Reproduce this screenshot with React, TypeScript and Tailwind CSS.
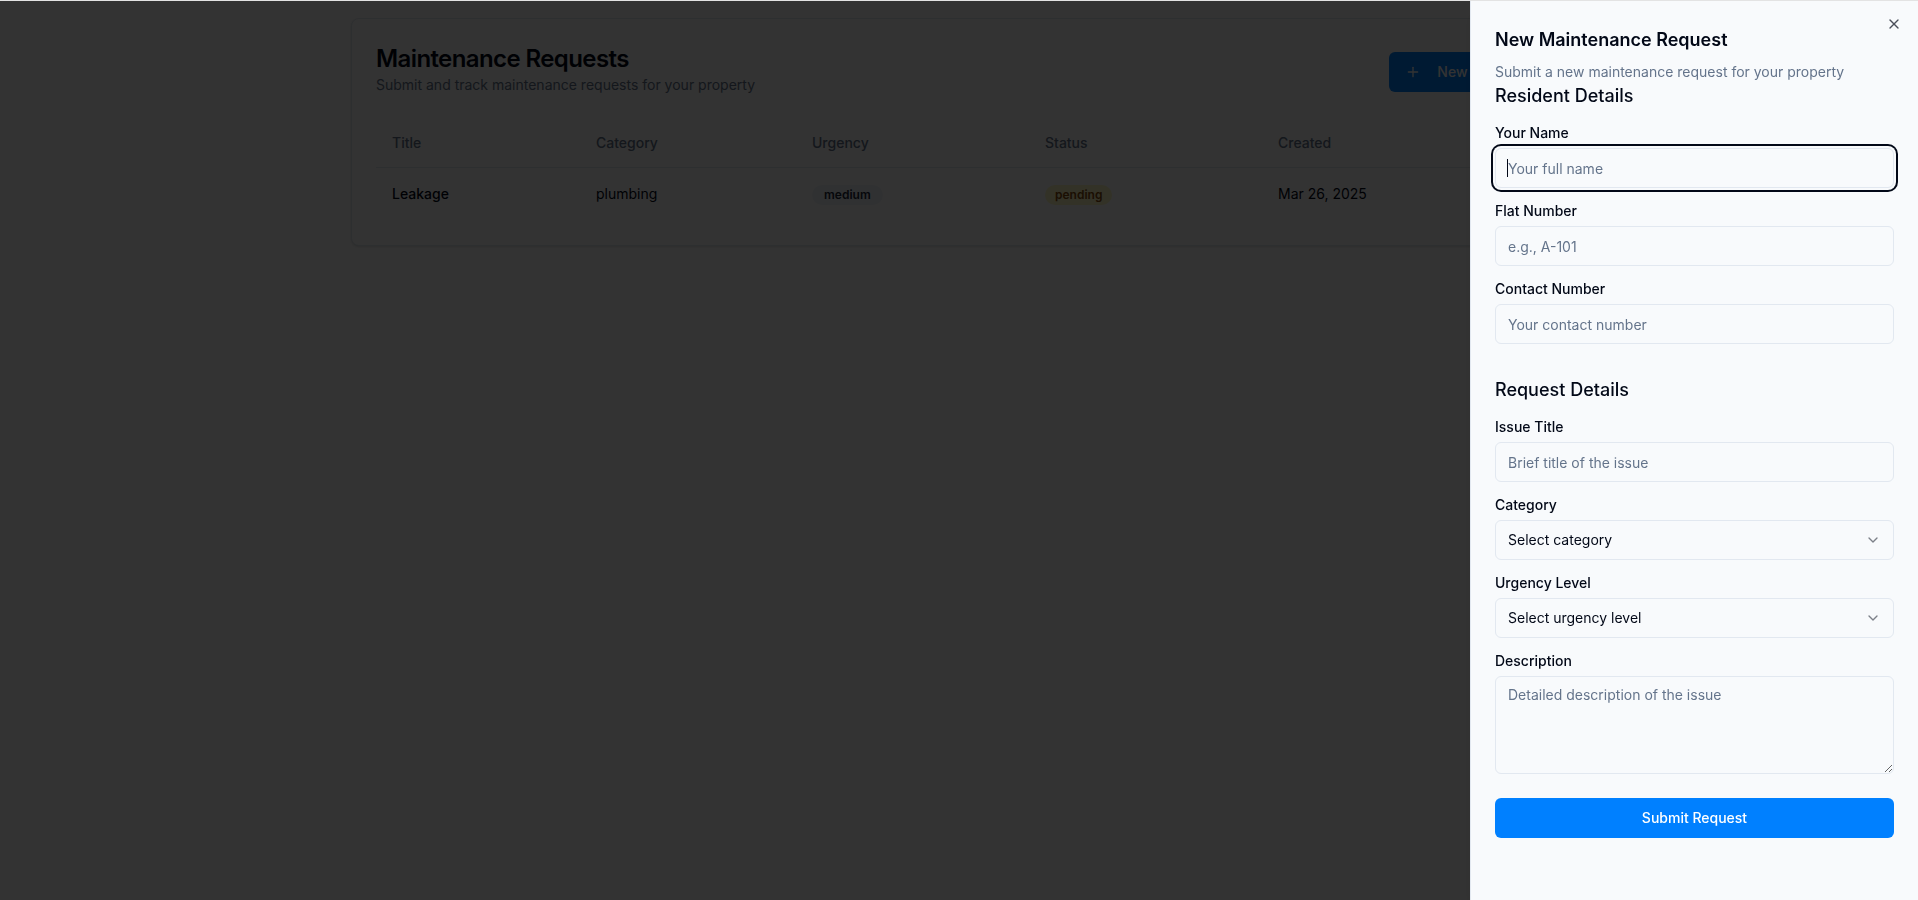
import { ChevronDown, Plus, X } from "lucide-react";

const requests = [
  {
    title: "Leakage",
    category: "plumbing",
    urgency: "medium",
    status: "pending",
    created: "Mar 26, 2025",
  },
];

function Field({ label, children }: { label: string; children: React.ReactNode }) {
  return (
    <div className="space-y-2">
      <label className="block text-sm font-medium leading-none text-[#020817]">{label}</label>
      {children}
    </div>
  );
}

const inputClass =
  "flex h-10 w-full rounded-md border border-[#e2e8f0] bg-[#f8fafc] px-3 py-2 text-sm text-[#020817] placeholder:text-[#64748b] outline-none";

function SelectTrigger({ placeholder }: { placeholder: string }) {
  return (
    <button
      type="button"
      className="flex h-10 w-full items-center justify-between rounded-md border border-[#e2e8f0] bg-[#f8fafc] px-3 py-2 text-sm text-[#020817]"
    >
      <span>{placeholder}</span>
      <ChevronDown className="h-4 w-4 opacity-50" />
    </button>
  );
}

export default function App() {
  return (
    <div className="relative min-h-screen bg-white font-['Inter',sans-serif] text-[#020817]">
      <div className="mx-auto max-w-7xl px-8 pt-[18px]">
        <div className="rounded-lg border border-[#e2e8f0] bg-white shadow-sm">
          <div className="flex items-start justify-between p-6">
            <div>
              <h1 className="text-2xl font-semibold tracking-tight">Maintenance Requests</h1>
              <p className="text-sm text-[#64748b]">Submit and track maintenance requests for your property</p>
            </div>
            <button className="mt-[9px] flex h-10 items-center gap-4 rounded-md bg-[#0080ff] px-4 text-sm font-medium text-white">
              <Plus className="h-4 w-4" />
              New Request
            </button>
          </div>
          <div className="px-6 pb-6">
            <table className="w-full table-fixed text-sm">
              <thead>
                <tr className="border-b border-[#e2e8f0]">
                  <th className="h-12 w-[204px] px-4 text-left font-medium text-[#64748b]">Title</th>
                  <th className="h-12 w-[216px] px-4 text-left font-medium text-[#64748b]">Category</th>
                  <th className="h-12 w-[233px] px-4 text-left font-medium text-[#64748b]">Urgency</th>
                  <th className="h-12 w-[233px] px-4 text-left font-medium text-[#64748b]">Status</th>
                  <th className="h-12 w-[233px] px-4 text-left font-medium text-[#64748b]">Created</th>
                  <th className="h-12 px-4 text-right font-medium text-[#64748b]">Actions</th>
                </tr>
              </thead>
              <tbody>
                {requests.map((r) => (
                  <tr key={r.title}>
                    <td className="p-4 font-medium">{r.title}</td>
                    <td className="p-4">{r.category}</td>
                    <td className="p-4">
                      <span className="inline-flex rounded-full bg-[#f1f5f9] px-3 py-0.5 text-xs font-semibold text-[#1e293b]">
                        {r.urgency}
                      </span>
                    </td>
                    <td className="p-4">
                      <span className="inline-flex rounded-full bg-[#fef9c3] px-2.5 py-0.5 text-xs font-semibold text-[#854d0e]">
                        {r.status}
                      </span>
                    </td>
                    <td className="p-4">{r.created}</td>
                    <td className="p-4 text-right">View</td>
                  </tr>
                ))}
              </tbody>
            </table>
          </div>
        </div>
      </div>

      <div className="fixed inset-0 z-40 bg-black/80" />

      <div className="fixed inset-y-0 right-0 z-50 w-[448px] border-l border-[#e2e8f0] bg-[#f8fafc] px-6 pb-6 pt-[26px] shadow-lg">
        <button className="absolute right-4 top-4 rounded-sm opacity-70">
          <X className="h-4 w-4" />
        </button>
        <div className="space-y-2">
          <h2 className="text-lg font-semibold">New Maintenance Request</h2>
          <p className="text-sm text-[#64748b]">Submit a new maintenance request for your property</p>
        </div>
        <form>
          <div className="space-y-4">
            <h3 className="text-lg font-medium">Resident Details</h3>
            <Field label="Your Name">
              <div className="relative">
                <input
                  autoFocus
                  placeholder="Your full name"
                  className={`${inputClass} ring-2 ring-[#020817] ring-offset-2 ring-offset-[#f8fafc]`}
                />
                <span className="pointer-events-none absolute left-3 top-[11px] h-[18px] w-px bg-[#020817]" />
              </div>
            </Field>
            <Field label="Flat Number">
              <input placeholder="e.g., A-101" className={inputClass} />
            </Field>
            <Field label="Contact Number">
              <input placeholder="Your contact number" className={inputClass} />
            </Field>
          </div>

          <div className="mt-[32px] space-y-4">
            <h3 className="text-lg font-medium">Request Details</h3>
            <Field label="Issue Title">
              <input placeholder="Brief title of the issue" className={inputClass} />
            </Field>
            <Field label="Category">
              <SelectTrigger placeholder="Select category" />
            </Field>
            <Field label="Urgency Level">
              <SelectTrigger placeholder="Select urgency level" />
            </Field>
            <Field label="Description">
              <textarea
                rows={4}
                placeholder="Detailed description of the issue"
                className="flex w-full rounded-md border border-[#e2e8f0] bg-[#f8fafc] px-3 py-2 text-sm leading-5 placeholder:text-[#64748b] outline-none"
              />
            </Field>
          </div>

          <button
            type="button"
            className="mt-[24px] flex h-10 w-full items-center justify-center rounded-md bg-[#0080ff] text-sm font-medium text-white"
          >
            Submit Request
          </button>
        </form>
      </div>

      <div className="fixed inset-x-0 top-0 z-[60] h-px bg-[#e3e3e3]" />
    </div>
  );
}
